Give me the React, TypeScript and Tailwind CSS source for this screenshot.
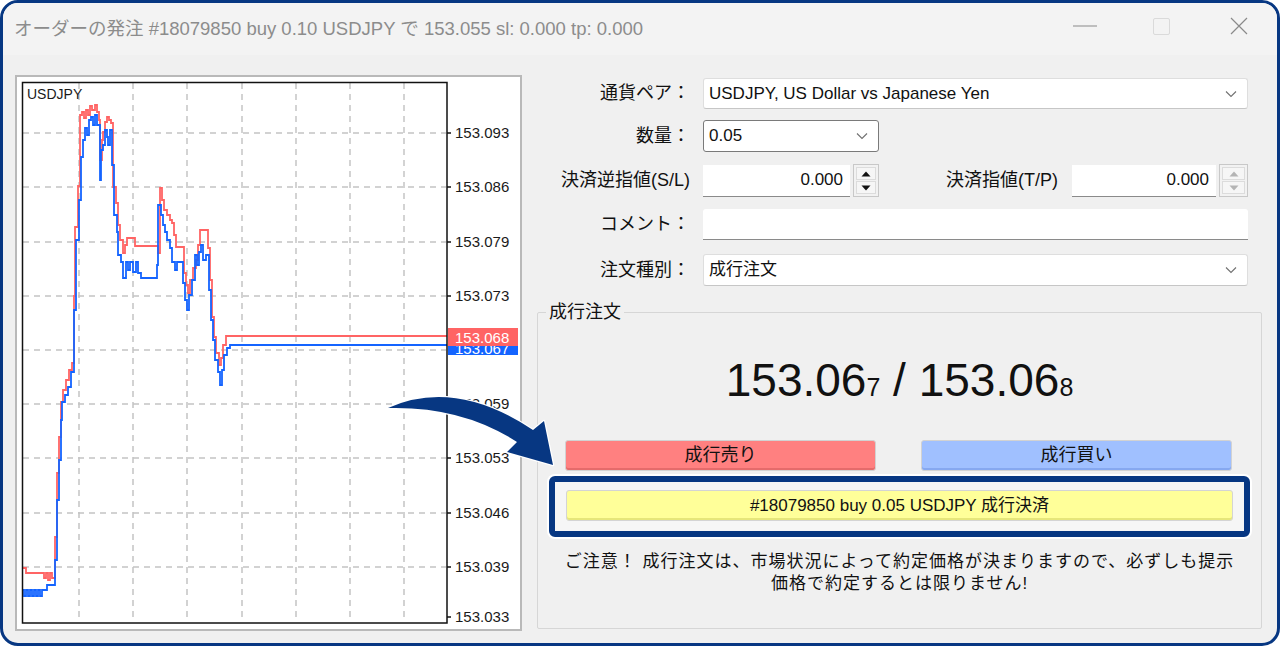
import React from 'react';

const FONT = { fontFamily: '"Liberation Sans", "Noto Sans CJK JP", sans-serif' };

// 売り(ask) / 買い(bid) tick lines, page coordinates
const red: number[][] = [
  [22, 568], [26, 573], [42, 573], [44, 578], [46, 573], [48, 580], [50, 573], [52, 578], [55, 578],
  [55, 537], [57, 473], [59, 437], [61, 402], [63, 390], [66, 380], [69, 370], [72, 363], [74, 296],
  [75, 227], [78, 186], [80, 115], [82, 112], [84, 118], [86, 110], [88, 115], [90, 106], [92, 110],
  [95, 105], [97, 112], [99, 120], [100, 160], [102, 140], [103, 132], [105, 122], [107, 117],
  [109, 120], [111, 123], [113, 187], [116, 203], [118, 225], [120, 240], [123, 253], [125, 245],
  [127, 238], [134, 238], [135, 246], [157, 246], [158, 253], [160, 188], [162, 200], [164, 210],
  [167, 215], [170, 220], [172, 223], [174, 235], [176, 247], [183, 247], [184, 273], [186, 285],
  [188, 293], [190, 280], [193, 268], [196, 260], [198, 245], [200, 230], [207, 230], [208, 248],
  [210, 280], [212, 317], [214, 337], [216, 353], [219, 365], [221, 358], [223, 345], [226, 336],
  [447, 336],
];

const blue: number[][] = [
  [22, 590], [24, 596], [26, 590], [28, 596], [30, 590], [32, 596], [34, 590], [36, 596], [38, 590],
  [40, 596], [42, 590], [46, 590], [47, 585], [55, 585],
  [55, 560], [57, 500], [59, 460], [61, 420], [62, 402], [65, 395], [68, 387], [71, 372], [74, 310],
  [76, 240], [79, 200], [81, 157], [83, 140], [85, 128], [87, 135], [89, 120], [91, 117], [93, 125],
  [95, 115], [97, 125], [100, 180], [101, 150], [103, 145], [105, 130], [107, 137], [108, 145],
  [110, 130], [112, 165], [114, 215], [117, 232], [118, 255], [121, 262], [123, 278], [126, 262],
  [128, 270], [130, 262], [133, 272], [136, 262], [138, 273], [141, 278], [155, 278], [157, 265],
  [158, 205], [161, 215], [163, 225], [165, 232], [167, 240], [170, 248], [172, 262], [175, 270],
  [177, 262], [182, 262], [183, 283], [185, 300], [187, 310], [189, 295], [192, 280], [195, 255],
  [197, 265], [199, 252], [201, 245], [203, 260], [206, 255], [209, 290], [211, 320], [213, 340],
  [215, 360], [218, 372], [220, 385], [222, 370], [224, 355], [227, 348], [230, 345], [447, 345],
];

const stepPath = (pts: number[][]) =>
  pts.map((p, i) => (i === 0 ? `M${p[0]} ${p[1]}` : `H${p[0]} V${p[1]}`)).join(' ');

const gridX = [79, 133, 187, 242, 296, 350, 404];
const gridY = [133, 187, 242, 296, 350, 404, 458, 513, 567];
const labels: [number, string][] = [
  [133, '153.093'], [187, '153.086'], [242, '153.079'], [296, '153.073'], [404, '153.059'],
  [458, '153.053'], [513, '153.046'], [567, '153.039'], [617, '153.033'],
];

function Chart() {
  return (
    <div className="w-[507px] h-[556px] border-2 border-[#b9b9b9] bg-white shrink-0">
      <svg width="503" height="552" viewBox="17 77 503 552" style={{ fontFamily: '"Liberation Sans", sans-serif' }}>
        <defs>
          <clipPath id="bidBadge">
            <rect x="448" y="346" width="70" height="9" />
          </clipPath>
        </defs>
        {gridX.map((x) => (
          <line key={x} x1={x} y1={83} x2={x} y2={622} stroke="#c4c4c4" strokeWidth="1.5" strokeDasharray="6 5" />
        ))}
        {gridY.map((y) => (
          <line key={y} x1={23} y1={y} x2={446} y2={y} stroke="#c4c4c4" strokeWidth="1.5" strokeDasharray="6 5" />
        ))}
        <path d={stepPath(red)} fill="none" stroke="#ff6464" strokeWidth="1.8" />
        <path d={stepPath(blue)} fill="none" stroke="#1464ff" strokeWidth="1.8" />
        <rect x="22.5" y="82.5" width="424.5" height="540.5" fill="none" stroke="#111" strokeWidth="1.5" />
        <text x="27" y="99" fontSize="14" fill="#1a1a1a">USDJPY</text>
        {labels.map(([y, t]) => (
          <g key={t}>
            <line x1={447} y1={y} x2={451} y2={y} stroke="#111" strokeWidth="1.5" />
            <text x="455" y={y + 5} fontSize="15" fill="#1a1a1a">{t}</text>
          </g>
        ))}
        <rect x="448" y="338" width="70" height="17" fill="#1464ff" />
        <text x="455" y="354" fontSize="15" fill="#fff" clipPath="url(#bidBadge)">153.067</text>
        <rect x="448" y="328" width="70" height="18" fill="#ff6464" />
        <text x="455" y="343" fontSize="15" fill="#fff">153.068</text>
      </svg>
    </div>
  );
}

function Chevron() {
  return (
    <svg width="12" height="8" viewBox="0 0 12 8" className="shrink-0">
      <path d="M1 1.5 L6 6.5 L11 1.5" fill="none" stroke="#707070" strokeWidth="1.1" />
    </svg>
  );
}

function Combo({ value, className, focused }: { value: string; className: string; focused?: boolean }) {
  return (
    <div
      className={`flex items-center justify-between pl-[5px] pr-[10px] bg-white rounded-[3px] border ${
        focused ? 'border-[#7a7a7a]' : 'border-[#dedede] border-b-[#c6c6c6]'
      } ${className}`}
    >
      <span className="text-[17px] text-[#111]">{value}</span>
      <Chevron />
    </div>
  );
}

function Spinner({ disabled }: { disabled?: boolean }) {
  const c = disabled ? '#b4b4b4' : '#111';
  return (
    <div className="flex flex-col h-[33px] w-full border border-[#c8c8c8] bg-[#f2f2f2] p-[2px] gap-[1px]">
      <div className="flex-1 flex items-center justify-center border border-[#dcdcdc] bg-[#f6f6f6]">
        <svg width="10" height="6" viewBox="0 0 10 6"><path d="M0.5 5.5 L5 0.5 L9.5 5.5 Z" fill={c} /></svg>
      </div>
      <div className="flex-1 flex items-center justify-center border border-[#dcdcdc] bg-[#f6f6f6]">
        <svg width="10" height="6" viewBox="0 0 10 6"><path d="M0.5 0.5 L5 5.5 L9.5 0.5 Z" fill={c} /></svg>
      </div>
    </div>
  );
}

function NumInput({ className }: { className: string }) {
  return (
    <div className={`h-[32px] bg-white border-b border-[#8a8a8a] flex items-center justify-end pr-[7px] text-[17px] text-[#111] ${className}`}>
      0.000
    </div>
  );
}

function Label({ children }: { children: React.ReactNode }) {
  return <div className="w-[153px] text-right text-[18px] text-[#111] mr-[13px] shrink-0 whitespace-nowrap">{children}</div>;
}

export default function App() {
  return (
    <div className="relative w-[1280px] h-[646px] bg-white" style={FONT}>
      <div className="w-full h-full rounded-[18px] border-[3px] border-[#073782] bg-[#f0f0f0] overflow-hidden flex flex-col">
        {/* title bar */}
        <div className="h-[52px] bg-[#f3f3f3] flex items-center shrink-0">
          <span className="pl-[11px] text-[18.5px] text-[#8c8c8c] whitespace-nowrap">
            オーダーの発注 #18079850 buy 0.10 USDJPY で 153.055 sl: 0.000 tp: 0.000
          </span>
          <div className="ml-auto flex h-full items-center pb-[6px]">
            <div className="w-[77px] flex justify-center">
              <svg width="24" height="2" viewBox="0 0 24 2"><line x1="0" y1="1" x2="24" y2="1" stroke="#8a8a8a" strokeWidth="1.2" /></svg>
            </div>
            <div className="w-[77px] flex justify-center">
              <div className="w-[17px] h-[17px] border border-[#dadada] rounded-[2px]" />
            </div>
            <div className="w-[77px] flex justify-center">
              <svg width="18" height="18" viewBox="0 0 18 18">
                <path d="M1 1 L17 17 M17 1 L1 17" stroke="#8a8a8a" strokeWidth="1.2" />
              </svg>
            </div>
          </div>
        </div>

        {/* body */}
        <div className="flex pt-[20px] pl-[12px]">
          <Chart />

          <div className="ml-[15px] w-[725px] flex flex-col">
            <div className="flex flex-col gap-[12px] mt-[3px]">
              <div className="flex items-center">
                <Label>通貨ペア：</Label>
                <Combo value="USDJPY, US Dollar vs Japanese Yen" className="w-[545px] h-[31px]" />
              </div>
              <div className="flex items-center -mt-[1px]">
                <Label>数量：</Label>
                <Combo value="0.05" className="w-[176px] h-[32px]" focused />
              </div>
              <div className="flex items-center">
                <Label>決済逆指値(S/L)</Label>
                <NumInput className="w-[147px]" />
                <div className="w-[26px] ml-[3px]"><Spinner /></div>
                <div className="flex-1 text-right pr-[14px] text-[18px] text-[#111] whitespace-nowrap">決済指値(T/P)</div>
                <NumInput className="w-[144px]" />
                <div className="w-[29px] ml-[3px] mr-[14px]"><Spinner disabled /></div>
              </div>
              <div className="flex items-center">
                <Label>コメント：</Label>
                <div className="w-[545px] h-[31px] bg-white border-b border-[#8a8a8a] rounded-t-[3px]" />
              </div>
              <div className="flex items-center mt-[2px]">
                <Label>注文種別：</Label>
                <Combo value="成行注文" className="w-[545px] h-[32px]" />
              </div>
            </div>

            <fieldset className="mt-[13px] h-[330px] border border-[#d6d6d6] rounded-[2px] flex flex-col">
              <legend className="ml-[8px] px-[3px] text-[18px] text-[#111] leading-[26px]">成行注文</legend>
              <div className="mt-[32px] text-center text-[#111] leading-[46px] whitespace-nowrap">
                <span className="text-[46px]">153.06</span>
                <span className="text-[25px]">7</span>
                <span className="text-[46px]"> / 153.06</span>
                <span className="text-[25px]">8</span>
              </div>
              <div className="mt-[26px] ml-[27px] mr-[29px] flex justify-between">
                <button className="w-[311px] h-[31px] rounded-[3px] border border-[#d2d2d2] bg-[#ff8080] shadow-[inset_0_-2px_0_#e56b6b] text-[18px] text-[#111]">
                  成行売り
                </button>
                <button className="w-[311px] h-[31px] rounded-[3px] border border-[#d2d2d2] bg-[#a0c0ff] shadow-[inset_0_-2px_0_#86a8f0] text-[18px] text-[#111]">
                  成行買い
                </button>
              </div>
              <div className="mt-[5px] ml-[11px] w-[701px] h-[61px] border-[6px] border-[#073782] rounded-[6px] ring-2 ring-white bg-[#f6f6f6] px-[11px] pt-[8px]">
                <button className="w-full h-[31px] rounded-[3px] border border-[#d4d4d4] bg-[#ffff99] shadow-[inset_0_-2px_0_#e6e67a] text-[17px] text-[#111]">
                  #18079850 buy 0.05 USDJPY 成行決済
                </button>
              </div>
              <p className="mt-[14px] text-center text-[17px] leading-[22px] tracking-[1px] text-[#111] whitespace-nowrap">
                ご注意！ 成行注文は、市場状況によって約定価格が決まりますので、必ずしも提示
                <br />
                価格で約定するとは限りません!
              </p>
            </fieldset>
          </div>
        </div>
      </div>

      {/* arrow pointing at the close button */}
      <svg className="absolute top-0 left-0 pointer-events-none" width="1280" height="646" viewBox="0 0 1280 646">
        <path
          d="M388 408 Q455 378 533 430 L544 421 L553 465 L507 452 L517 442 Q462 406 388 408 Z"
          fill="#073782"
          stroke="#fff"
          strokeWidth="2.5"
          strokeLinejoin="round"
          paintOrder="stroke"
        />
      </svg>
    </div>
  );
}
